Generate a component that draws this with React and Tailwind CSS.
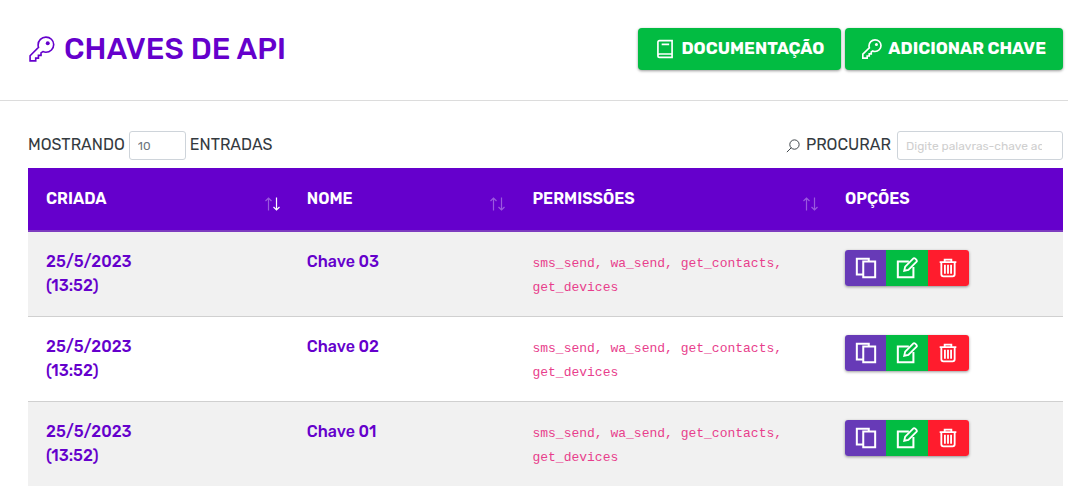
import { useState } from 'react'

const KEYS = [
  { id: 3, date: '25/5/2023', time: '(13:52)', name: 'Chave 03', permissions: 'sms_send, wa_send, get_contacts, get_devices' },
  { id: 2, date: '25/5/2023', time: '(13:52)', name: 'Chave 02', permissions: 'sms_send, wa_send, get_contacts, get_devices' },
  { id: 1, date: '25/5/2023', time: '(13:52)', name: 'Chave 01', permissions: 'sms_send, wa_send, get_contacts, get_devices' },
]

const COLUMNS = [
  { key: 'id', label: 'Criada', width: 'w-[25.2%]', sortable: true },
  { key: 'name', label: 'Nome', width: 'w-[21.8%]', sortable: true },
  { key: 'permissions', label: 'Permissões', width: 'w-[30.2%]', sortable: true },
  { key: 'options', label: 'Opções', width: 'w-[22.8%]', sortable: false },
]

function Icon({ className, children, strokeWidth = 1.5 }) {
  return (
    <svg
      viewBox="0 0 24 24"
      className={className}
      fill="none"
      stroke="currentColor"
      strokeWidth={strokeWidth}
      aria-hidden="true"
    >
      {children}
    </svg>
  )
}

function KeyIcon({ className, strokeWidth }) {
  return (
    <Icon className={className} strokeWidth={strokeWidth}>
      <path d="M15.6 1C11.6 1 8.4 4.2 8.4 8.2c0 .9.1 1.6.4 2.3L1 18.2V23h5.2v-2.6h2.500v-2.500h2.400v-2.300l1.700-1.200c.9.400 1.800.6 2.800.6 4 0 7.200-3.200 7.200-7.100S19.600 1 15.600 1z" />
      <circle cx="17.300" cy="6.700" r="1.800" fill="currentColor" stroke="none" />
    </Icon>
  )
}

function BookIcon({ className }) {
  return (
    <Icon className={className} strokeWidth={2}>
      <path d="M3.500 20V4c0-1.200.8-2 2-2h15v20h-15c-1.300 0-2-.8-2-2s.7-2 2-2h15M8 6.500h9" />
    </Icon>
  )
}

function SearchIcon({ className }) {
  return (
    <Icon className={className} strokeWidth={1.600}>
      <circle cx="14.500" cy="9.500" r="8" />
      <path d="M9 15l-7.500 7.500" />
    </Icon>
  )
}

function CopyIcon({ className }) {
  return (
    <Icon className={className} strokeWidth={2.200}>
      <path d="M9 19H2V2h13v3" />
      <path d="M9 5h13v17H9z" />
    </Icon>
  )
}

function EditIcon({ className }) {
  return (
    <Icon className={className} strokeWidth={2.200}>
      <path d="M14 5H2v17h17V11" />
      <path d="M9 15l1-4.500 9-9c1.100-1.100 4.600 2.300 3.500 3.500l-9 9z" strokeWidth="2" />
    </Icon>
  )
}

function TrashIcon({ className }) {
  return (
    <Icon className={className} strokeWidth={2.200}>
      <path d="M2 5h20M8 5V2h8v3M4 5v14.500c0 1.600 1 2.500 2.500 2.500h11c1.500 0 2.500-.9 2.500-2.500V5" />
      <path d="M8.300 8v11M12 8v11M15.700 8v11" />
    </Icon>
  )
}

function SortArrows({ direction }) {
  return (
    <svg viewBox="0 0 16 14" className="h-3.5 w-4" fill="none" stroke="currentColor" strokeWidth="1.200" aria-hidden="true">
      <path d="M4.500 13.500V1M1.500 4l3-3 3 3" opacity={direction === 'asc' ? 1 : 0.35} />
      <path d="M12.500 .5V13M9.500 10l3 3 3-3" opacity={direction === 'desc' ? 1 : 0.35} />
    </svg>
  )
}

const actionClass = 'flex h-9 flex-1 items-center justify-center'
const headerButtonClass =
  'flex h-[42px] items-center gap-1.5 rounded bg-[#02bc42] px-[17px] uppercase shadow-[0_1px_3px_rgba(0,0,0,0.4)]'

export default function App() {
  const [sort, setSort] = useState({ key: 'id', direction: 'desc' })
  const [search, setSearch] = useState('')

  const toggleSort = (key) => {
    setSort((s) => ({ key, direction: s.key === key && s.direction === 'asc' ? 'desc' : 'asc' }))
  }

  const rows = KEYS
    .filter((k) => `${k.name} ${k.permissions}`.toLowerCase().includes(search.toLowerCase()))
    .sort((a, b) => {
      const order = a[sort.key] > b[sort.key] ? 1 : a[sort.key] < b[sort.key] ? -1 : 0
      return sort.direction === 'asc' ? order : -order
    })

  return (
    <div className="bg-white font-[Rubik,Roboto,sans-serif] text-base text-[#343a40]">
      {/* Page header */}
      <header className="flex items-center justify-between border-b border-[#dcdcdc] pt-7 pr-[5px] pb-[30px] pl-7">
        <h1 className="flex items-center gap-2 text-[30px] leading-10 font-medium text-[#6500cc] uppercase">
          <KeyIcon className="h-[26px] w-7" />
          Chaves de API
        </h1>
        <div className="flex gap-1 text-[17px] font-bold text-white">
          <a href="#docs" className={headerButtonClass}>
            <BookIcon className="size-5" />
            Documentação
          </a>
          <button type="button" className={headerButtonClass}>
            <KeyIcon className="size-5" strokeWidth={2} />
            Adicionar chave
          </button>
        </div>
      </header>

      <main className="pt-[30px] pr-[5px] pl-7">
        {/* Table controls */}
        <div className="mb-2 flex items-center justify-between uppercase">
          <label className="flex items-center gap-1">
            <span className="pb-0.5">Mostrando</span>
            <select defaultValue="10" className="h-[29px] w-[57px] appearance-none rounded-[3px] border border-[#ced4da] bg-white px-2 text-xs text-[#6c757d]">
              <option>10</option>
              <option>25</option>
              <option>50</option>
            </select>
            <span className="pb-0.5">entradas</span>
          </label>
          <label className="flex items-center gap-1.5">
            <SearchIcon className="size-3.5" />
            <span className="pb-0.5">Procurar</span>
            <input
              type="text"
              value={search}
              onChange={(e) => setSearch(e.target.value)}
              placeholder="Digite palavras-chave aqui"
              className="h-[29px] w-[166px] rounded-[3px] border border-[#ced4da] pr-5 pl-2 text-xs placeholder:text-[#cfcfcf]"
            />
          </label>
        </div>

        <table className="w-full table-fixed border-collapse text-left">
          <thead>
            <tr className="border-b-2 border-[#7d3cc0] bg-[#6500cc] text-white">
              {COLUMNS.map((col) => (
                <th key={col.key} className={`${col.width} px-[18px] py-[19px] font-semibold uppercase`}>
                  {col.sortable ? (
                    <button
                      type="button"
                      onClick={() => toggleSort(col.key)}
                      className="-mr-2 flex w-[calc(100%+9px)] items-end justify-between font-semibold uppercase"
                    >
                      {col.label}
                      <SortArrows direction={sort.key === col.key ? sort.direction : null} />
                    </button>
                  ) : (
                    col.label
                  )}
                </th>
              ))}
            </tr>
          </thead>
          <tbody>
            {rows.map((row) => (
              <tr key={row.id} className="border-b border-[#d0d0d0] align-top odd:bg-[#f1f1f1] last:border-b-0">
                <td className="px-[18px] py-[18px] font-medium text-[#6500cc]">
                  {row.date}
                  <br />
                  {row.time}
                </td>
                <td className="px-[18px] py-[18px] font-medium text-[#6500cc]">{row.name}</td>
                <td className="px-[18px] py-[18px]">
                  <code className="font-['Liberation_Mono',monospace] text-[13px] text-[#e83e8c]">
                    {row.permissions}
                  </code>
                </td>
                <td className="px-[18px] py-[18px]">
                  <div className="flex w-[124px] overflow-hidden rounded-[3px] text-white shadow-[0_1px_3px_rgba(0,0,0,0.4)]">
                    <button type="button" aria-label="Copiar" className={`${actionClass} bg-[#673ab7]`}>
                      <CopyIcon className="size-[22px]" />
                    </button>
                    <button type="button" aria-label="Editar" className={`${actionClass} bg-[#02bc42]`}>
                      <EditIcon className="size-[22px]" />
                    </button>
                    <button type="button" aria-label="Excluir" className={`${actionClass} bg-[#ff1c2d]`}>
                      <TrashIcon className="size-5" />
                    </button>
                  </div>
                </td>
              </tr>
            ))}
          </tbody>
        </table>
      </main>
    </div>
  )
}
